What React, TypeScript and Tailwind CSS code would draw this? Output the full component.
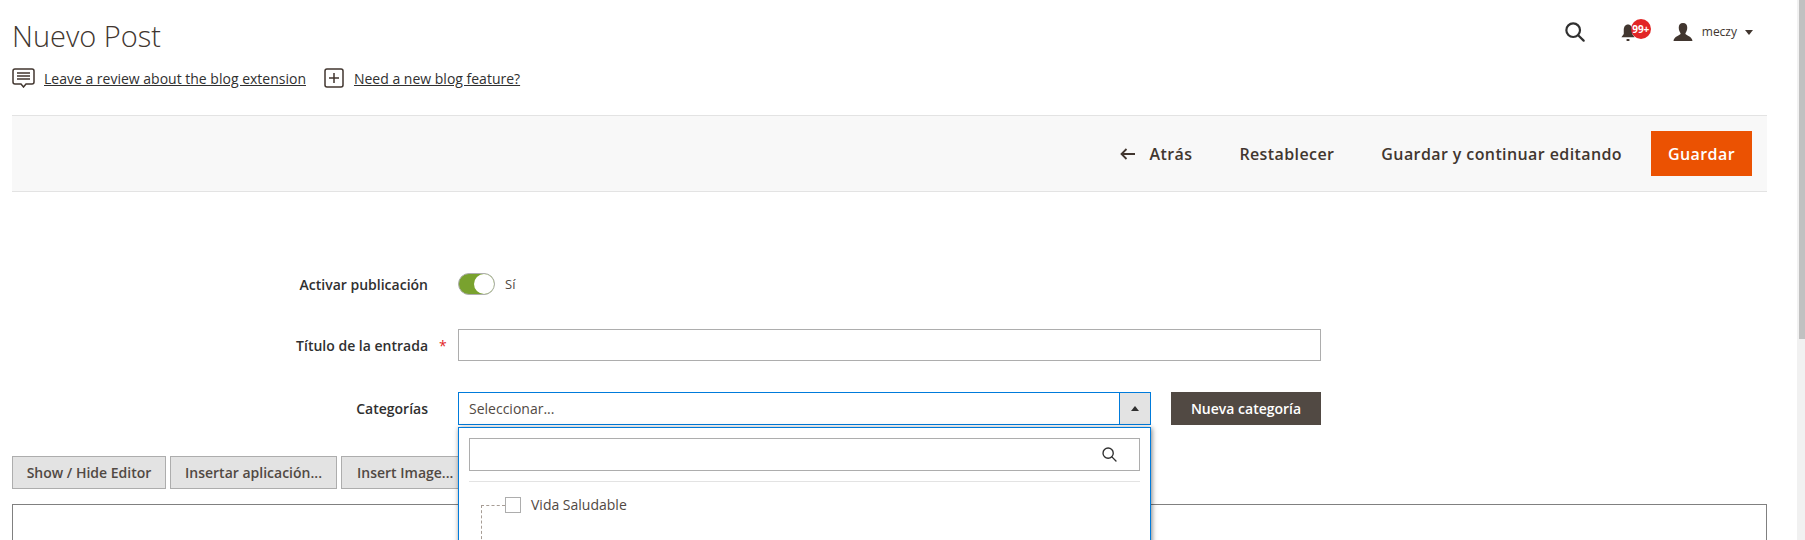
import React from "react";

const font = { fontFamily: '"Open Sans", sans-serif' };

function Search({ size = 20, sw = 2 }: { size?: number; sw?: number }) {
  return (
    <svg width={size} height={size} viewBox="0 0 22 22" fill="none" stroke="#303030" strokeWidth={sw}>
      <circle cx="9" cy="9" r="7.5" />
      <path d="M14.5 14.5L20.5 20.5" strokeLinecap="round" />
    </svg>
  );
}

function FormRow({ label, required, children, className }: { label: string; required?: boolean; children: React.ReactNode; className?: string }) {
  return (
    <div className={"flex items-center " + (className ?? "")}>
      <div className="w-[416px] text-right text-[14px] font-semibold text-[#303030]">{label}</div>
      <div className="w-[30px] pl-[11px] text-[14px] text-[#e22626]">{required ? "*" : ""}</div>
      {children}
    </div>
  );
}

export default function App() {
  return (
    <div className="relative flex h-[540px] w-[1805px] overflow-hidden bg-white text-[#303030]" style={font}>
      <div className="w-[1797px] shrink-0 pl-[12px] pr-[30px]">
        <div className="flex items-start justify-between pt-[18px]">
          <h1 className="text-[29px] font-light leading-[36px] text-[#41362f]">Nuevo Post</h1>
          <div className="flex items-center pr-[14px] pt-[4px]">
            <Search sw={2.4} />
            <div className="relative ml-[35px] h-[20px] w-[16px]">
              <svg width="16" height="20" viewBox="0 0 17 20" fill="#41362f">
                <path d="M8.500 2c3 0 4.500 2.500 4.500 6v4l2.500 3.500h-14L4 12V8c0-3.500 1.500-6 4.500-6zM7 17.500h3v2H7z" />
              </svg>
              <span className="absolute -top-[3px] left-[11px] flex h-[20px] w-[20px] items-center justify-center rounded-full bg-[#e22626] text-[10px] font-bold text-white">99+</span>
            </div>
            <svg className="ml-[37px]" width="20" height="18" viewBox="0 0 20 19" fill="#41362f">
              <path d="M10 0c3 0 4.500 2 4.500 5S13 10 12.500 11c0 2 7.500 3 7.500 8H0c0-5 7.500-6 7.500-8C7 10 5.500 8 5.500 5S7 0 10 0z" />
            </svg>
            <span className="ml-[9px] text-[12px] text-[#41362f]">meczy</span>
            <span className="ml-[8px] h-0 w-0 border-x-[4px] border-t-[5px] border-x-transparent border-t-[#41362f]" />
          </div>
        </div>
        <div className="mt-[13px] flex h-[22px] items-center text-[14px] text-[#303030]">
          <svg width="23" height="20" viewBox="0 0 23 20" fill="none" stroke="#41362f" strokeWidth="1.500">
            <path d="M3 1h17a2 2 0 0 1 2 2v11a2 2 0 0 1-2 2h-6l-2.500 3-2.500-3H3a2 2 0 0 1-2-2V3a2 2 0 0 1 2-2z" />
            <path d="M5 5h13M5 8h13M5 11h13" />
          </svg>
          <a className="ml-[9px] underline">Leave a review about the blog extension</a>
          <svg className="ml-[18px]" width="20" height="20" viewBox="0 0 20 20" fill="none" stroke="#41362f" strokeWidth="1.500">
            <rect x="1" y="1" width="18" height="18" rx="2" />
            <path d="M5 10h10M10 5v10" />
          </svg>
          <a className="ml-[10px] underline">Need a new blog feature?</a>
        </div>
        <div className="mt-[26px] flex h-[77px] items-center justify-end border-y border-[#e3e3e3] bg-[#f8f8f8] pr-[15px] text-[16px] font-semibold tracking-[0.4px] text-[#41362f]">
          <svg width="16" height="12" viewBox="0 0 16 12" fill="none" stroke="#41362f" strokeWidth="1.800">
            <path d="M15 6H2M6.500 1L1.500 6l5 5" />
          </svg>
          <span className="ml-[13px]">Atrás</span>
          <span className="ml-[47px]">Restablecer</span>
          <span className="ml-[47px]">Guardar y continuar editando</span>
          <span className="ml-[29px] flex h-[45px] w-[101px] items-center justify-center bg-[#eb5202] text-white">Guardar</span>
        </div>
        <div className="pt-[81px]">
          <FormRow label="Activar publicación" className="h-[22px]">
            <div className="relative h-[22px] w-[37px] rounded-full border border-[#adadad] bg-[#79a22e]">
              <span className="absolute right-0 top-0 h-[20px] w-[20px] rounded-full bg-white" />
            </div>
            <span className="ml-[10px] mt-[2px] text-[13px] text-[#514943]">Sí</span>
          </FormRow>
          <FormRow label="Título de la entrada" required className="mt-[34px] h-[32px]">
            <div className="h-[32px] w-[863px] border border-[#adadad] bg-white" />
          </FormRow>
          <FormRow label="Categorías" className="mt-[31px] h-[33px]">
            <div className="flex h-[33px] w-[693px] items-center border border-[#007bdb] bg-white">
              <span className="flex-1 pl-[10px] text-[14px] text-[#514943]">Seleccionar...</span>
              <span className="flex h-full w-[31px] items-center justify-center border-l border-[#007bdb] bg-[#e3e3e3]">
                <span className="h-0 w-0 border-x-[4px] border-b-[5px] border-x-transparent border-b-[#303030]" />
              </span>
            </div>
            <div className="ml-[20px] flex h-[33px] w-[150px] items-center justify-center bg-[#514943] text-[14px] font-semibold text-white">Nueva categoría</div>
          </FormRow>
        </div>
        <div className="mt-[31px] flex gap-[4px] text-[14px] font-semibold text-[#514943]">
          <div className="flex h-[33px] w-[154px] items-center justify-center border border-[#adadad] bg-[#e3e3e3]">Show / Hide Editor</div>
          <div className="flex h-[33px] w-[167px] items-center justify-center border border-[#adadad] bg-[#e3e3e3]">Insertar aplicación...</div>
          <div className="flex h-[33px] w-[150px] items-center border border-[#adadad] bg-[#e3e3e3] pl-[15px]">Insert Image...</div>
        </div>
        <div className="mt-[15px] h-[60px] border border-[#808080] bg-white" />
      </div>
      <div className="w-[8px] shrink-0 bg-[#f1f1f1] pl-[2px]">
        <div className="h-[339px] bg-[#c1c1c1]" />
      </div>

      <div className="absolute left-[458px] top-[427px] h-[130px] w-[693px] border border-[#007bdb] bg-white px-[10px] pt-[10px] shadow-[1px_1px_5px_rgba(0,0,0,0.5)]">
        <div className="flex h-[33px] items-center justify-end border border-[#adadad] pr-[22px]">
          <Search size={15} sw={2} />
        </div>
        <div className="mt-[10px] border-t border-[#e3e3e3]" />
        <div className="relative mt-[12px] flex items-center pl-[36px] text-[14px] text-[#514943]">
          <span className="absolute left-[12px] top-[11px] h-[60px] w-[24px] border-l border-t border-dashed border-[#a79d95]" />
          <span className="h-[16px] w-[16px] border border-[#adadad] bg-white" />
          <span className="ml-[10px]">Vida Saludable</span>
        </div>
      </div>
    </div>
  );
}
